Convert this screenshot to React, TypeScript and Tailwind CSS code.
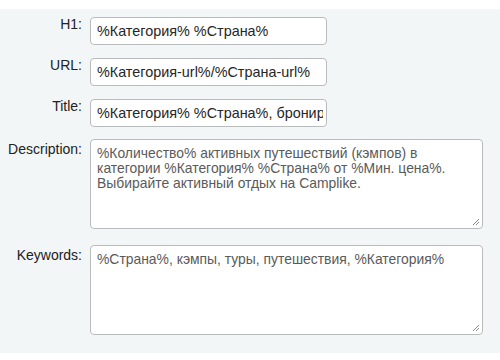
import React from 'react';

const font = { fontFamily: '"Liberation Sans", Arial, sans-serif' };

function Field({ label, value }: { label: string; value: string }) {
  return (
    <div className="flex items-start">
      <div className="w-[82px] shrink-0 pt-0 text-right text-[14px] leading-[14px] text-[#222]">{label}</div>
      <div className="ml-[8px] h-[28px] w-[237px] rounded-[4px] border border-[#b9bcbc] bg-white pl-[6px] pr-[3px] text-[14.4px] leading-[26px] text-[#262626]">
        <div className="overflow-hidden whitespace-nowrap">{value}</div>
      </div>
    </div>
  );
}

function Area({ label, value }: { label: string; value: string }) {
  return (
    <div className="flex items-start">
      <div className="w-[82px] shrink-0 pt-[3px] text-right text-[14px] leading-[14px] text-[#222]">{label}</div>
      <div className="relative ml-[8px] h-[90px] w-[393px] rounded-[4px] border border-[#b9bcbc] bg-white pl-[6px] pr-[20px] pt-[6px] text-[13.9px] leading-[15px] text-[#5a5a5a]">
        {value}
        <svg className="absolute bottom-[2px] right-[2px]" width="8" height="8" viewBox="0 0 8 8">
          <path d="M7 1 L1 7 M7 4 L4 7" stroke="#888" strokeWidth="1" />
        </svg>
      </div>
    </div>
  );
}

export default function App() {
  return (
    <div className="h-[360px] w-[500px] bg-white" style={font}>
      <div className="h-[9px] bg-white" />
      <div className="flex h-[344px] flex-col bg-[#f3f6f6] pt-[8px]">
        <div className="flex flex-col gap-[13px]">
          <Field label="H1:" value="%Категория% %Страна%" />
          <Field label="URL:" value="%Категория-url%/%Страна-url%" />
          <Field label="Title:" value="%Категория% %Страна%, бронируйте онлайн" />
        </div>
        <div className="mt-[12px] flex flex-col gap-[16px]">
          <Area
            label="Description:"
            value="%Количество% активных путешествий (кэмпов) в категории %Категория% %Страна% от %Мин. цена%. Выбирайте активный отдых на Camplike."
          />
          <Area label="Keywords:" value="%Страна%, кэмпы, туры, путешествия, %Категория%" />
        </div>
      </div>
    </div>
  );
}
